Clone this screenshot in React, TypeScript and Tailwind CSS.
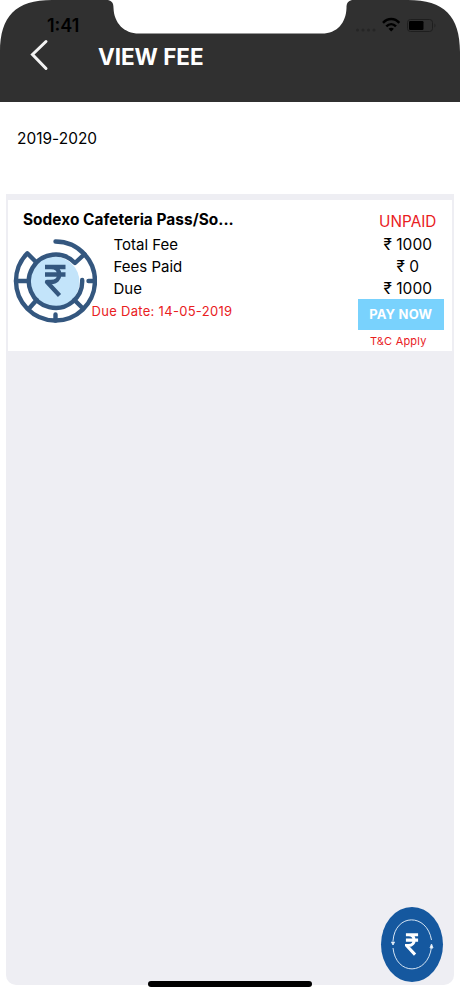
import React from 'react';

const feeRows = ['Total Fee', 'Fees Paid', 'Due'];
const amounts = ['1000', '0', '1000'];

// Rupee sign drawn for the icons
function Rupee({ className }: { className?: string }) {
  return (
    <svg viewBox="0 0 20 34" className={className} fill="none" stroke="currentColor" strokeWidth="4.500">
      <path d="M1 2.500H19M1 10.500H19M2 2.500H5C16 2.500 16 18.500 5 18.500H2L14.500 32" />
    </svg>
  );
}

function StatusBar() {
  return (
    <>
      {/* Screen corners and notch */}
      <svg className="absolute top-0 left-0" width="460" height="60" viewBox="0 0 460 60">
        <path
          fill="#fff"
          d="M0 0H52C16 0 0 16 0 52ZM460 0H408C444 0 460 16 460 52ZM108 0C112 1 113.500 3 113.500 8C114 23 124 33.500 139 33.500H322C337 33.500 346 23 346.500 8C346.500 3 348 1 352 0Z"
        />
      </svg>
      <span className="absolute top-[14px] left-[47px] text-[18px] leading-6 font-semibold text-black">1:41</span>
      <svg className="absolute top-[16px] left-[354px]" width="84" height="20" viewBox="0 0 84 20">
        <g fill="#252525">
          <circle cx="3.500" cy="14" r="1.500" />
          <circle cx="9" cy="14" r="1.500" />
          <circle cx="14.500" cy="14" r="1.500" />
          <circle cx="20" cy="14" r="1.500" />
        </g>
        <g fill="none" stroke="#000" strokeWidth="2.500">
          <path d="M29 6.900C33.800 1.800 40.700 1.800 45.300 6.900" />
          <path d="M32.300 10.300C35.300 7.400 39.100 7.400 42 10.300" />
        </g>
        <path fill="#000" d="M34.500 12.800C36.300 11.300 38.300 11.300 39.900 12.800L37.200 15.600Z" />
        <rect x="53.500" y="3.500" width="25" height="12" rx="3" fill="none" stroke="#1e1e1e" />
        <rect x="55" y="5" width="14.500" height="9" rx="1.200" fill="#000" />
        <path d="M80.500 7.500C81.700 8 81.700 11 80.500 11.500Z" fill="#1e1e1e" />
      </svg>
    </>
  );
}

function FeeIcon() {
  return (
    <svg className="h-[84px] w-[84px] shrink-0" viewBox="0 0 84 84" fill="none" stroke="#34577f" strokeWidth="4.400" strokeLinecap="round" strokeLinejoin="round">
      <circle cx="41" cy="43" r="25.500" fill="#c3e4fa" stroke="none" />
      {/* Inner ring, joined to the outer one by the upper right spoke */}
      <path d="M42.500 2.500A39.500 39.500 0 0 1 71.500 15.200L62 24A26.700 26.700 0 1 0 69.200 41" />
      <path d="M71.500 15.200A39.500 39.500 0 1 1 14.300 14.300L22.500 22.500" />
      <path d="M3 42H15.500M75.500 42H82M16.500 69L23.600 61M42.500 75.500V81.500M61.400 61L69.500 69" />
      <path strokeWidth="4.300" strokeLinecap="butt" d="M32 28H52.500M32 35.500H52.500M33 28H38C49 28 49 43 38 43H34L46.500 56.500" />
    </svg>
  );
}

export default function App() {
  return (
    <div className="relative flex h-[996px] w-[460px] flex-col overflow-hidden bg-white font-['Inter',sans-serif] text-black">
      {/* Header */}
      <header className="relative h-[101.500px] shrink-0 bg-[#303030]">
        <StatusBar />
        <div className="flex h-[114px] items-center pl-[29px]">
          <svg width="20" height="32" viewBox="0 0 20 32" fill="none" stroke="#f3f3f3" strokeWidth="3" strokeLinecap="round" className="relative -top-[2px]">
            <path d="M17 2.500L3.500 15.500L17 29.500" />
          </svg>
          <h1 className="ml-[49px] text-[22.500px] font-bold tracking-[-0.060px] text-white">VIEW FEE</h1>
        </div>
      </header>

      <div className="h-[92.500px] shrink-0 pt-[25.500px] pl-[17px] text-[15.400px] leading-6 tracking-[0.050px]">2019-2020</div>

      {/* Fee list */}
      <main className="mr-[6.500px] ml-[6px] h-[791px] rounded-b-[10px] bg-[#eeeef3] pt-[6px] pr-[1.500px] pl-[2px]">
        <section className="flex h-[151px] justify-between bg-white">
          <div className="pl-[5px]">
            <h2 className="pt-[8px] pl-[10px] text-[15.400px] leading-6 font-bold tracking-[0.040px] whitespace-nowrap">Sodexo Cafeteria Pass/So...</h2>
            <div className="flex pt-[1.500px]">
              <div className="pt-[5.500px]">
                <FeeIcon />
              </div>
              <div className="relative text-[15px] leading-[22.300px]">
                {feeRows.map((label) => (
                  <div key={label} className="pl-[16.500px]">{label}</div>
                ))}
                <p className="-ml-[5.500px] text-[13px] leading-[22px] tracking-[0.300px] text-[#e9201e]">Due Date: 14-05-2019</p>
              </div>
            </div>
          </div>

          <div className="mr-[8px] flex w-[86.500px] flex-col items-center pt-[10px]">
            <span className="ml-[14px] text-[15.300px] leading-[23.500px] text-[#e9201e]">UNPAID</span>
            <div className="ml-[14px] flex flex-col items-center text-[15.500px] leading-[22.300px]">
              {amounts.map((amount, i) => (
                <span key={i} className="whitespace-nowrap">₹ {amount}</span>
              ))}
            </div>
            <button className="-mt-[1.500px] h-[31px] w-full shrink-0 bg-[#79d2fd] text-[13px] font-bold tracking-[0.200px] whitespace-nowrap text-white">PAY NOW</button>
            <span className="-ml-[5px] text-[11px] leading-[23px] tracking-[0.200px] text-[#e9201e]">T&amp;C Apply</span>
          </div>
        </section>
      </main>

      {/* Floating pay button */}
      <button className="absolute top-[907px] left-[381px] flex h-[75px] w-[62px] items-center justify-center rounded-[50%] bg-[#15589f] text-white">
        <svg className="absolute inset-0" width="62" height="75" viewBox="0 0 62 75" fill="none" stroke="#d5e5f4" strokeWidth="1">
          <path d="M12 34C14 6 46 6 50.500 33M50.500 40C47 69 15 69 12 41" />
          <path d="M10.500 35H13.500L12 38ZM49 41H52L50.500 37Z" fill="#fff" />
        </svg>
        <Rupee className="h-[23px] w-[14px]" />
      </button>

      {/* Home indicator */}
      <div className="absolute top-[981px] left-[148px] h-[6px] w-[164px] rounded-full bg-black" />
    </div>
  );
}
